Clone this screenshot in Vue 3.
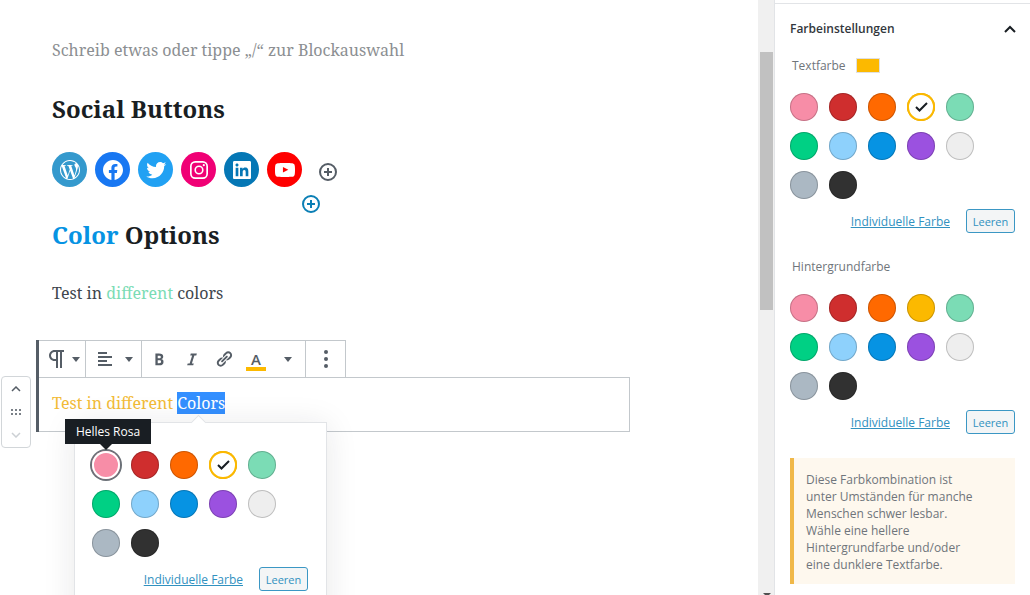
<script setup>
import { ref } from 'vue'

const colors = [
  { name: 'Helles Rosa', value: '#f78da7' },
  { name: 'Kräftiges Rot', value: '#cf2e2e' },
  { name: 'Leuchtendes Orange', value: '#ff6900' },
  { name: 'Leuchtendes Gelb', value: '#fcb900' },
  { name: 'Helles Mintgrün', value: '#7bdcb5' },
  { name: 'Kräftiges Mintgrün', value: '#00d084' },
  { name: 'Helles Blau', value: '#8ed1fc' },
  { name: 'Kräftiges Blau', value: '#0693e3' },
  { name: 'Kräftiges Lila', value: '#9b51e0' },
  { name: 'Sehr helles Grau', value: '#eeeeee' },
  { name: 'Helles Grau', value: '#abb8c3' },
  { name: 'Dunkles Grau', value: '#313131' },
]

const textColor = ref('#fcb900')
const backgroundColor = ref('')
const inlineColor = ref('#fcb900')

const socials = [
  { name: 'WordPress', color: '#3499cd', d: 'M12.158,12.786L9.46,20.625c0.806,0.237,1.657,0.366,2.54,0.366c1.047,0,2.051-0.181,2.986-0.51c-0.024-0.038-0.046-0.079-0.065-0.124L12.158,12.786z M3.009,12c0,3.559,2.068,6.634,5.067,8.092L3.788,8.341C3.289,9.459,3.009,10.696,3.009,12z M18.069,11.546c0-1.112-0.399-1.881-0.741-2.48c-0.456-0.741-0.883-1.368-0.883-2.109c0-0.826,0.627-1.596,1.51-1.596c0.04,0,0.078,0.005,0.116,0.007C16.472,3.904,14.34,3.009,12,3.009c-3.141,0-5.904,1.612-7.512,4.052c0.211,0.007,0.41,0.011,0.579,0.011c0.94,0,2.396-0.114,2.396-0.114C7.947,6.93,8.004,7.642,7.52,7.699c0,0-0.487,0.057-1.029,0.085l3.274,9.739l1.968-5.901l-1.401-3.838C9.848,7.756,9.389,7.699,9.389,7.699C8.904,7.67,8.961,6.93,9.446,6.958c0,0,1.484,0.114,2.368,0.114c0.94,0,2.397-0.114,2.397-0.114c0.485-0.028,0.542,0.684,0.057,0.741c0,0-0.488,0.057-1.029,0.085l3.249,9.665l0.897-2.996C17.841,13.284,18.069,12.316,18.069,11.546z M19.889,7.686c0.039,0.286,0.06,0.593,0.06,0.924c0,0.912-0.171,1.938-0.684,3.22l-2.746,7.94c2.673-1.558,4.47-4.454,4.47-7.771C20.991,10.436,20.591,8.967,19.889,7.686z M12,22C6.486,22,2,17.514,2,12C2,6.486,6.486,2,12,2c5.514,0,10,4.486,10,10C22,17.514,17.514,22,12,22z' },
  { name: 'Facebook', color: '#1877f2', d: 'M12 2C6.5 2 2 6.5 2 12c0 5 3.7 9.1 8.4 9.9v-7H7.9V12h2.5V9.8c0-2.5 1.5-3.9 3.8-3.9 1.1 0 2.2.2 2.2.2v2.5h-1.3c-1.2 0-1.6.8-1.6 1.6V12h2.8l-.4 2.9h-2.3v7C18.3 21.1 22 17 22 12c0-5.5-4.5-10-10-10z' },
  { name: 'Twitter', color: '#21a1f3', d: 'M22.23,5.924c-0.736,0.326-1.527,0.547-2.357,0.646c0.847-0.508,1.498-1.312,1.804-2.27c-0.793,0.47-1.671,0.812-2.606,0.996C18.324,4.498,17.257,4,16.077,4c-2.266,0-4.103,1.837-4.103,4.103c0,0.322,0.036,0.635,0.106,0.935C8.67,8.867,5.647,7.234,3.623,4.751C3.27,5.357,3.067,6.062,3.067,6.814c0,1.424,0.724,2.679,1.825,3.415c-0.673-0.021-1.305-0.206-1.859-0.513c0,0.017,0,0.034,0,0.052c0,1.988,1.414,3.647,3.292,4.023c-0.344,0.094-0.707,0.144-1.081,0.144c-0.264,0-0.521-0.026-0.772-0.074c0.522,1.63,2.038,2.816,3.833,2.85c-1.404,1.1-3.174,1.756-5.096,1.756c-0.331,0-0.658-0.019-0.979-0.057c1.816,1.164,3.973,1.843,6.29,1.843c7.547,0,11.675-6.252,11.675-11.675c0-0.178-0.004-0.355-0.012-0.531C20.985,7.47,21.68,6.747,22.23,5.924z' },
  { name: 'Instagram', color: '#f00075', d: 'M8.2 3h7.6A5.2 5.2 0 0 1 21 8.2v7.6a5.2 5.2 0 0 1-5.2 5.2H8.2A5.2 5.2 0 0 1 3 15.8V8.2A5.2 5.2 0 0 1 8.2 3zm0 1.7a3.5 3.5 0 0 0-3.5 3.5v7.6a3.5 3.5 0 0 0 3.5 3.5h7.6a3.5 3.5 0 0 0 3.5-3.5V8.2a3.5 3.5 0 0 0-3.5-3.5H8.2zM12 7.4a4.6 4.6 0 1 1 0 9.2 4.6 4.6 0 0 1 0-9.2zm0 1.6a3 3 0 1 0 0 6 3 3 0 0 0 0-6zm4.8-2.9a1.1 1.1 0 1 1 0 2.2 1.1 1.1 0 0 1 0-2.2z' },
  { name: 'LinkedIn', color: '#0577b5', d: 'M19.7,3H4.3C3.582,3,3,3.582,3,4.3v15.4C3,20.418,3.582,21,4.3,21h15.4c0.718,0,1.3-0.582,1.3-1.3V4.3C21,3.582,20.418,3,19.7,3z M8.339,18.338H5.667v-8.59h2.672V18.338z M7.004,8.574c-0.857,0-1.549-0.694-1.549-1.548c0-0.855,0.691-1.548,1.549-1.548c0.854,0,1.547,0.694,1.547,1.548C8.551,7.881,7.858,8.574,7.004,8.574z M18.339,18.338h-2.669v-4.177c0-0.996-0.017-2.278-1.387-2.278c-1.389,0-1.601,1.086-1.601,2.206v4.249h-2.667v-8.59h2.559v1.174h0.037c0.356-0.675,1.227-1.387,2.526-1.387c2.703,0,3.203,1.779,3.203,4.092V18.338z' },
  { name: 'YouTube', color: '#ff0000', d: 'M21.8,8.001c0,0-0.195-1.378-0.795-1.985c-0.76-0.797-1.613-0.801-2.004-0.847c-2.799-0.202-6.997-0.202-6.997-0.202h-0.009c0,0-4.198,0-6.997,0.202C4.608,5.216,3.756,5.22,2.995,6.016C2.395,6.623,2.2,8.001,2.2,8.001S2,9.62,2,11.238v1.517c0,1.618,0.2,3.237,0.2,3.237s0.195,1.378,0.795,1.985c0.761,0.797,1.76,0.771,2.205,0.855c1.6,0.153,6.8,0.201,6.8,0.201s4.203-0.006,7.001-0.209c0.391-0.047,1.243-0.051,2.004-0.847c0.6-0.607,0.795-1.985,0.795-1.985s0.2-1.618,0.2-3.237v-1.517C22,9.62,21.8,8.001,21.8,8.001z M9.935,14.594l-0.001-5.62l5.404,2.82L9.935,14.594z' },
]
</script>

<template>
  <div class="app">
    <main class="canvas">
      <p class="para placeholder">Schreib etwas oder tippe „/“ zur Blockauswahl</p>
      <h2 class="heading">Social Buttons</h2>
      <div class="socials">
        <a v-for="s in socials" :key="s.name" href="#" class="social" :aria-label="s.name" :style="{ background: s.color }">
          <svg viewBox="0 0 24 24" width="24" height="24"><path fill="#fff" fill-rule="evenodd" :d="s.d" /></svg>
        </a>
        <button class="add" aria-label="Social-Link hinzufügen">
          <svg viewBox="0 0 20 20" width="20" height="20" fill="none" stroke="currentColor" stroke-width="2"><circle cx="10" cy="10" r="8" /><path d="M10 6v8M6 10h8" /></svg>
        </button>
      </div>
      <div class="inserter">
        <button class="insert" aria-label="Block hinzufügen">
          <svg viewBox="0 0 20 20" width="20" height="20" fill="none" stroke="currentColor" stroke-width="2"><circle cx="10" cy="10" r="8" /><path d="M10 6v8M6 10h8" /></svg>
        </button>
      </div>
      <h2 class="heading options"><span class="blue">Color</span> Options</h2>
      <p class="para sample">Test in <span class="mint">different</span> colors</p>

      <section class="block">
        <div class="toolbar" role="toolbar">
          <div class="group type">
            <button aria-label="Blocktyp ändern">
              <svg viewBox="0 0 24 24" width="24" height="24"><path d="M11 5v7H9.5C7.6 12 6 10.4 6 8.5S7.6 5 9.5 5H11m8-2H9.5C6.5 3 4 5.5 4 8.5S6.5 14 9.5 14H11v7h2V5h2v16h2V5h2V3z" /></svg>
              <i class="caret"></i>
            </button>
          </div>
          <div class="group align">
            <button aria-label="Ausrichtung">
              <svg viewBox="0 0 20 20" width="20" height="20"><path d="M12 5V3H3v2h9zm5 4V7H3v2h14zm-5 4v-2H3v2h9zm5 4v-2H3v2h14z" /></svg>
              <i class="caret"></i>
            </button>
          </div>
          <div class="group format">
            <button aria-label="Fett">
              <svg viewBox="0 0 20 20" width="18" height="18"><path d="M6 4v13h4.54c1.37 0 2.46-.33 3.26-1 .8-.66 1.2-1.58 1.2-2.77 0-.84-.17-1.51-.51-2.01s-.9-.85-1.67-1.03v-.09c.57-.1 1.02-.4 1.36-.9s.51-1.13.51-1.91c0-1.14-.39-1.98-1.17-2.5C12.75 4.26 11.5 4 9.78 4H6zm2.57 5.15V6.26h1.36c.73 0 1.27.11 1.61.32.34.22.51.58.51 1.07 0 .54-.16.92-.47 1.15s-.82.35-1.51.35h-1.5zm0 2.19h1.6c1.44 0 2.16.53 2.16 1.61 0 .6-.17 1.05-.51 1.34s-.86.43-1.57.43H8.57v-3.38z" /></svg>
            </button>
            <button aria-label="Kursiv">
              <svg viewBox="0 0 20 20" width="18" height="18"><path d="M14.78 6h-2.13l-2.8 9h2.12l-.62 2H4.6l.62-2h2.14l2.8-9H8.03l.62-2h6.75z" /></svg>
            </button>
            <button aria-label="Link">
              <svg viewBox="0 0 20 20" width="18" height="18"><path d="M17.74 2.76c1.68 1.69 1.68 4.41 0 6.1l-1.53 1.52c-1.12 1.12-2.7 1.47-4.14 1.09l2.62-2.61.76-.77.76-.76c.84-.84.84-2.2 0-3.04-.84-.85-2.2-.85-3.04 0l-.77.76-3.38 3.38c-.37-1.44-.02-3.02 1.1-4.14l1.52-1.53c1.69-1.68 4.42-1.68 6.1 0zM8.59 13.43l5.34-5.34c.42-.42.42-1.1 0-1.52-.44-.43-1.13-.39-1.53 0l-5.33 5.34c-.42.42-.42 1.1 0 1.52.44.43 1.13.39 1.52 0zm-.76 2.29l4.14-4.15c.38 1.44.03 3.02-1.09 4.14l-1.52 1.53c-1.69 1.68-4.41 1.68-6.1 0-1.68-1.68-1.68-4.42 0-6.1l1.53-1.52c1.12-1.12 2.7-1.47 4.14-1.1l-4.14 4.15c-.85.84-.85 2.2 0 3.05.84.84 2.2.84 3.04 0z" /></svg>
            </button>
            <button aria-label="Textfarbe" class="letter"><span>A</span></button>
            <button aria-label="Weitere Rich-Text-Steuerelemente"><i class="caret"></i></button>
          </div>
          <div class="group more">
            <button aria-label="Weitere Optionen">
              <svg viewBox="0 0 20 20" width="20" height="20"><circle cx="10" cy="3" r="2" /><circle cx="10" cy="10" r="2" /><circle cx="10" cy="17" r="2" /></svg>
            </button>
          </div>
        </div>
        <p class="para content">Test in different <span class="marked">Colors</span></p>

        <div class="mover">
          <button aria-label="Nach oben"><svg viewBox="0 0 10 6" width="10" height="6" fill="none" stroke="#555d66" stroke-width="1.5"><path d="M1 5l4-4 4 4" /></svg></button>
          <button aria-label="Ziehen"><svg viewBox="0 0 10 6" width="10" height="6" fill="#7a8087"><path d="M0 0h2v2H0zM4 0h2v2H4zM8 0h2v2H8zM0 4h2v2H0zM4 4h2v2H4zM8 4h2v2H8z" /></svg></button>
          <button aria-label="Nach unten" disabled><svg viewBox="0 0 10 6" width="10" height="6" fill="none" stroke="#ccd0d4" stroke-width="1.5"><path d="M1 1l4 4 4-4" /></svg></button>
        </div>

        <div class="popover">
          <div class="palette">
            <button
              v-for="(c, i) in colors" :key="c.name" class="swatch"
              :class="{ selected: inlineColor === c.value, focused: i === 0 }"
              :style="{ color: c.value }" :aria-label="c.name" @click="inlineColor = c.value"
            >
              <svg v-if="inlineColor === c.value" viewBox="0 0 20 20" width="20" height="20"><path d="M15.3 5.3l-6.8 6.8-2.8-2.8-1.4 1.4 4.2 4.2 8.2-8.2z" /></svg>
            </button>
          </div>
          <div class="actions">
            <a href="#">Individuelle Farbe</a>
            <button class="clear" @click="inlineColor = ''">Leeren</button>
          </div>
          <div class="tooltip" role="tooltip">Helles Rosa</div>
        </div>
      </section>
    </main>

    <div class="scrollbar"><div class="thumb"></div><i class="down"></i></div>

    <aside class="sidebar">
      <button class="panel-title">
        Farbeinstellungen
        <svg viewBox="0 0 12 8" width="12" height="8" fill="none" stroke="#191e23" stroke-width="2"><path d="M1 7l5-5 5 5" /></svg>
      </button>

      <section class="control">
        <div class="label">Textfarbe <span class="indicator" :style="{ background: textColor }"></span></div>
        <div class="palette">
          <button
            v-for="c in colors" :key="c.name" class="swatch" :class="{ selected: textColor === c.value }"
            :style="{ color: c.value }" :aria-label="c.name" @click="textColor = c.value"
          >
            <svg v-if="textColor === c.value" viewBox="0 0 20 20" width="20" height="20"><path d="M15.3 5.3l-6.8 6.8-2.8-2.8-1.4 1.4 4.2 4.2 8.2-8.2z" /></svg>
          </button>
        </div>
        <div class="actions">
          <a href="#">Individuelle Farbe</a>
          <button class="clear" @click="textColor = ''">Leeren</button>
        </div>
      </section>

      <section class="control">
        <div class="label">Hintergrundfarbe</div>
        <div class="palette">
          <button
            v-for="c in colors" :key="c.name" class="swatch" :class="{ selected: backgroundColor === c.value }"
            :style="{ color: c.value }" :aria-label="c.name" @click="backgroundColor = c.value"
          >
            <svg v-if="backgroundColor === c.value" viewBox="0 0 20 20" width="20" height="20"><path d="M15.3 5.3l-6.8 6.8-2.8-2.8-1.4 1.4 4.2 4.2 8.2-8.2z" /></svg>
          </button>
        </div>
        <div class="actions">
          <a href="#">Individuelle Farbe</a>
          <button class="clear" @click="backgroundColor = ''">Leeren</button>
        </div>
      </section>

      <p class="notice">Diese Farbkombination ist unter Umständen für manche Menschen schwer lesbar. Wähle eine hellere Hintergrundfarbe und/oder eine dunklere Textfarbe.</p>
    </aside>
  </div>
</template>

<style>
body {
  margin: 0;
  overflow: hidden;
}
</style>

<style scoped>
* {
  box-sizing: border-box;
}
.app {
  display: flex;
  height: 100vh;
  overflow: hidden;
  background: #fff;
  color: #191e23;
  font: 12px/17px "Open Sans", "Noto Sans", sans-serif;
}
button {
  border: 0;
  padding: 0;
  background: none;
  color: inherit;
  font: inherit;
  cursor: pointer;
}
svg {
  display: block;
}

/* Editor canvas */
.canvas {
  flex: 1;
  min-width: 0;
  padding: 36px 128px 0 52px;
  font-family: "Noto Serif", "DejaVu Serif Condensed", "DejaVu Serif", serif;
}
.para {
  margin: 0;
  font-size: 16px;
  line-height: 28px;
  color: #40464d;
}
.placeholder {
  color: #8c8f92;
}
.heading {
  margin: 28px 0 0;
  font-size: 24px;
  line-height: 34px;
  font-weight: 700;
}
.options {
  margin-top: 24px;
}
.socials {
  display: flex;
  align-items: center;
  gap: 8px;
  margin-top: 26px;
}
.social {
  display: grid;
  place-items: center;
  width: 35px;
  height: 35px;
  border-radius: 50%;
}
.add {
  margin: 4px 0 0 8px;
  color: #555d66;
}
.inserter {
  display: flex;
  justify-content: center;
  height: 3px;
  padding-top: 7px;
  margin-right: 60px;
}
.insert {
  height: 20px;
  color: #0b7fb5;
}
.blue {
  color: #0693e3;
}
.mint {
  color: #7bdcb5;
}
.sample {
  margin-top: 27px;
}

/* Selected block */
.block {
  position: relative;
  margin: 33px 0 0 -16px;
  border-left: 3px solid #555d66;
}
.toolbar {
  display: flex;
  width: max-content;
  height: 37px;
  border: 1px solid #c3c8cc;
  border-width: 1px 1px 0 0;
  fill: #555d66;
  color: #555d66;
}
.group {
  display: flex;
  align-items: center;
}
.group + .group {
  border-left: 1px solid #c3c8cc;
}
.group button {
  display: flex;
  align-items: center;
  justify-content: center;
  height: 36px;
}
.type button {
  width: 46px;
  gap: 3px;
}
.align button {
  width: 55px;
  gap: 10px;
}
.format button {
  width: 32px;
}
.format button:first-child {
  width: 34px;
}
.more button {
  width: 39px;
}
.caret {
  border: 4px solid transparent;
  border-top: 5px solid #555d66;
  border-bottom: 0;
}
.format {
  padding-right: 1px;
}
.letter span {
  width: 20px;
  height: 19px;
  border-bottom: 4px solid #fcb900;
  margin-top: 4px;
  font: 600 15px/15px "Open Sans", sans-serif;
}
.content {
  border: 1px solid #c3c8cc;
  border-left: 0;
  padding: 11px 13px 14px;
  color: #f2bb37;
}
.marked {
  display: inline-block;
  line-height: 22px;
  background: #338fff;
  color: #fff;
}
.mover {
  position: absolute;
  top: 36px;
  left: -38px;
  display: flex;
  flex-direction: column;
  width: 30px;
  height: 72px;
  border: 1px solid #d2d6d9;
  border-radius: 4px;
  background: #fff;
}
.mover button {
  flex: 1;
  display: grid;
  place-items: center;
}

/* Colour popover */
.popover {
  position: absolute;
  top: 82px;
  left: 35px;
  width: 253px;
  height: 200px;
  padding: 28px 18px 0 17px;
  border: 1px solid #e2e4e7;
  background: #fff;
  box-shadow: 0 3px 30px rgba(25, 30, 35, 0.1);
  font-family: "Open Sans", "Noto Sans", sans-serif;
}
.popover::before {
  content: "";
  position: absolute;
  top: -6px;
  left: 118px;
  width: 10px;
  height: 10px;
  border: 1px solid #e2e4e7;
  border-width: 1px 0 0 1px;
  background: #fff;
  transform: rotate(45deg);
}
.tooltip {
  position: absolute;
  top: -4px;
  left: -10px;
  width: 86px;
  padding: 4px 0;
  background: #191e23;
  color: #fff;
  text-align: center;
}
.tooltip::after {
  content: "";
  position: absolute;
  top: 25px;
  left: 35px;
  border: 6px solid transparent;
  border-top-color: #191e23;
  border-bottom: 0;
}

/* Palette */
.palette {
  display: grid;
  grid-template-columns: repeat(5, 28px);
  gap: 11px;
}
.swatch {
  display: grid;
  place-items: center;
  width: 28px;
  height: 28px;
  border-radius: 50%;
  background: currentColor;
  box-shadow: inset 0 0 0 1px rgba(0, 0, 0, 0.2);
}
.swatch.selected {
  background: #fff;
  box-shadow: inset 0 0 0 2px currentColor, inset 0 0 0 1px #d9a000;
}
.swatch.focused {
  box-shadow: inset 0 0 0 2px #fff, 0 0 0 2px #6c7178;
}
.swatch svg {
  fill: #191e23;
}
.actions {
  display: flex;
  align-items: center;
  justify-content: flex-end;
  gap: 16px;
  margin-top: 10px;
}
.actions a {
  color: #3191bf;
}
.clear {
  width: 49px;
  height: 24px;
  border: 1px solid #3b97c4;
  border-radius: 3px;
  background: #f3f5f6;
  color: #3191bf;
  font-size: 11px;
}

/* Scrollbar */
.scrollbar {
  position: relative;
  width: 16px;
  padding: 52px 1px 0 2px;
  background: #f0f0f0;
}
.thumb {
  height: 258px;
  background: #c1c1c1;
}
.down {
  position: absolute;
  bottom: -2px;
  left: 5px;
  border: 4px solid transparent;
  border-top-color: #505050;
  border-bottom: 0;
}

/* Settings sidebar */
.sidebar {
  width: 256px;
  padding: 3px 15px 0 15px;
  border-left: 1px solid #e2e4e7;
  color: #6f757b;
}
.panel-title {
  display: flex;
  align-items: center;
  justify-content: space-between;
  width: calc(100% + 30px);
  height: 50px;
  margin: 0 -15px;
  padding: 0 14px 0 15px;
  border-top: 1px solid #e2e4e7;
  color: #32373c;
  font-weight: 600;
}
.control {
  margin-bottom: 21px;
}
.label {
  display: flex;
  align-items: center;
  gap: 10px;
  height: 24px;
  padding-left: 2px;
  margin-bottom: 16px;
}
.indicator {
  width: 24px;
  height: 15px;
  border: 1px solid #e0e0e0;
}
.notice {
  margin: 24px 0 0;
  padding: 13px 36px 11px 12px;
  border-left: 4px solid #f0b849;
  background: #fef8ee;
}
</style>
